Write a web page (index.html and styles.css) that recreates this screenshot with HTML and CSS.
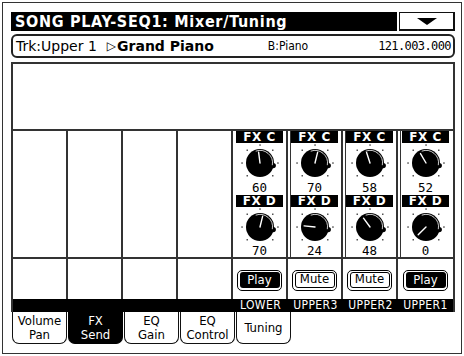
FILE: index.html
```html
<!DOCTYPE html>
<html>
<head>
<meta charset="utf-8">
<link rel="stylesheet" href="styles.css">
</head>
<body>
<svg width="0" height="0" class="defs">
  <defs>
    <symbol id="knob" viewBox="0 0 40 38">
      <g fill="#555">
        <rect x="19.3" y="1.3" width="1.5" height="1.5"/>
        <rect x="32" y="6.5" width="1.5" height="1.5"/>
        <rect x="37.2" y="19.3" width="1.5" height="1.5"/>
        <rect x="32" y="32" width="1.5" height="1.5"/>
        <rect x="6.5" y="6.5" width="1.5" height="1.5"/>
        <rect x="1.3" y="19.3" width="1.5" height="1.5"/>
        <rect x="6.5" y="32" width="1.5" height="1.5"/>
      </g>
      <circle cx="20" cy="20" r="14" fill="#000"/>
      <circle cx="33.2" cy="22.6" r="2.7" fill="#000"/>
      <path d="M15.7 8.2 A12.5 12.5 0 0 1 32.3 22.2" fill="none" stroke="#fff" stroke-width="0.8"/>
    </symbol>
  </defs>
</svg>
<div class="screen">
  <div class="titlebar">
    <div class="title">SONG PLAY-SEQ1: Mixer/Tuning</div>
    <div class="dropdown"><span class="tri"></span></div>
  </div>
  <div class="track">
    <span class="trk">Trk:Upper 1</span>
    <span class="arrow">▷</span><span class="prog">Grand Piano</span>
    <span class="bank">B:Piano</span>
    <span class="num">121.003.000</span>
  </div>
  <div class="main">
    <div class="blank"></div>
    <div class="grid">
      <div class="cell"></div>
      <div class="cell"></div>
      <div class="cell"></div>
      <div class="cell"></div>
      <div class="cell strip">
        <div class="lbl">FX C</div>
        <svg class="knob" width="40" height="38" viewBox="0 0 40 38"><use href="#knob"/><line x1="20" y1="20" x2="18.6" y2="9.1" class="ptr"/></svg>
        <div class="val">60</div>
        <div class="lbl">FX D</div>
        <svg class="knob" width="40" height="38" viewBox="0 0 40 38"><use href="#knob"/><line x1="20" y1="20" x2="22.6" y2="9.3" class="ptr"/></svg>
        <div class="val last">70</div>
      </div>
      <div class="cell strip dbl">
        <div class="lbl">FX C</div>
        <svg class="knob" width="40" height="38" viewBox="0 0 40 38"><use href="#knob"/><line x1="20" y1="20" x2="22.6" y2="9.3" class="ptr"/></svg>
        <div class="val">70</div>
        <div class="lbl">FX D</div>
        <svg class="knob" width="40" height="38" viewBox="0 0 40 38"><use href="#knob"/><line x1="20" y1="20" x2="9.1" y2="18.9" class="ptr"/></svg>
        <div class="val last">24</div>
      </div>
      <div class="cell strip dbl">
        <div class="lbl">FX C</div>
        <svg class="knob" width="40" height="38" viewBox="0 0 40 38"><use href="#knob"/><line x1="20" y1="20" x2="16.6" y2="9.5" class="ptr"/></svg>
        <div class="val">58</div>
        <div class="lbl">FX D</div>
        <svg class="knob" width="40" height="38" viewBox="0 0 40 38"><use href="#knob"/><line x1="20" y1="20" x2="13.5" y2="11.2" class="ptr"/></svg>
        <div class="val last">48</div>
      </div>
      <div class="cell strip dbl lastcol">
        <div class="lbl">FX C</div>
        <svg class="knob" width="40" height="38" viewBox="0 0 40 38"><use href="#knob"/><line x1="20" y1="20" x2="14.5" y2="10.6" class="ptr"/></svg>
        <div class="val">52</div>
        <div class="lbl">FX D</div>
        <svg class="knob" width="40" height="38" viewBox="0 0 40 38"><use href="#knob"/><line x1="20" y1="20" x2="12.2" y2="27.8" class="ptr"/></svg>
        <div class="val last">0</div>
      </div>

      <div class="cell b"></div>
      <div class="cell b"></div>
      <div class="cell b"></div>
      <div class="cell b"></div>
      <div class="cell b"><div class="btn"><div class="in play">Play</div></div></div>
      <div class="cell b"><div class="btn"><div class="in mute">Mute</div></div></div>
      <div class="cell b"><div class="btn"><div class="in mute">Mute</div></div></div>
      <div class="cell b lastcol"><div class="btn"><div class="in play">Play</div></div></div>
    </div>
    <div class="names">
      <span></span><span></span><span></span><span></span>
      <span>LOWER</span><span>UPPER3</span><span>UPPER2</span><span>UPPER1</span>
    </div>
  </div>
  <div class="tabs">
    <div class="tab">Volume<br>Pan</div>
    <div class="tab sel">FX<br>Send</div>
    <div class="tab">EQ<br>Gain</div>
    <div class="tab">EQ<br>Control</div>
    <div class="tab">Tuning</div>
  </div>
</div>
</body>
</html>
```
FILE: styles.css
```css
* { box-sizing: border-box; }
html, body { margin: 0; padding: 0; background: #fff; }
body { width: 464px; height: 356px; overflow: hidden; font-family: "DejaVu Sans", sans-serif; color: #000; }
.defs { position: absolute; }

.screen {
  margin: 2px;
  width: 460px;
  height: 352px;
  border: 1px solid #333;
  padding: 9px 6px 0 8px;
  display: flex;
  flex-direction: column;
}

.titlebar { display: flex; height: 19px; gap: 2px; }
.title {
  flex: 1;
  background: #000;
  color: #fff;
  font-family: "DejaVu Sans Condensed", "DejaVu Sans", sans-serif;
  font-stretch: condensed;
  font-weight: bold;
  font-size: 16px;
  letter-spacing: 0.7px;
  line-height: 19px;
  padding-left: 4px;
  white-space: nowrap;
  overflow: hidden;
}
.dropdown {
  width: 56px;
  border: 2px solid #111;
  border-left-width: 1px;
  border-top-width: 1px;
  display: flex;
  align-items: center;
  justify-content: center;
}
.tri {
  width: 0; height: 0;
  border-left: 10px solid transparent;
  border-right: 10px solid transparent;
  border-top: 7px solid #000;
}

.track {
  margin-top: 3px;
  height: 24px;
  border: 2px solid #222;
  border-radius: 6px;
  display: flex;
  align-items: center;
  padding: 0 2px 0 3px;
  white-space: nowrap;
}
.trk { font-size: 14px; }
.arrow { font-size: 12px; margin-left: 10px; margin-right: 1px; }
.prog { font-weight: bold; font-size: 14px; }
.bank { font-size: 12px; margin-left: 54px; font-family: "DejaVu Sans Condensed", "DejaVu Sans", sans-serif; font-stretch: condensed; }
.num { margin-left: auto; font-family: "DejaVu Sans Mono", monospace; font-size: 12px; letter-spacing: -0.6px; }

.main {
  margin-top: 4px;
  border: 2px solid #333;
  border-bottom: none;
  display: flex;
  flex-direction: column;
}
.blank { height: 65px; }
.grid {
  border-top: 2px solid #333;
  display: grid;
  grid-template-columns: repeat(8, 1fr);
  grid-template-rows: 128px 40px;
}
.cell { border-right: 2px solid #333; border-bottom: 2px solid #333; }
.cell.b { border-bottom: none; display: flex; align-items: center; justify-content: center; padding-top: 2px; }
.cell.lastcol { border-right: none; }
.strip { display: flex; flex-direction: column; align-items: center; }
.dbl { box-shadow: inset 2px 0 0 #fff, inset 3px 0 0 #333; }

.lbl {
  width: 47px;
  height: 12px;
  background: #000;
  color: #fff;
  font-weight: bold;
  font-size: 12px;
  line-height: 12px;
  text-align: center;
  letter-spacing: 0.5px;
}
.knob { display: block; }
.ptr { stroke: #fff; stroke-width: 1.4; stroke-linecap: round; }
.val {
  height: 14px;
  font-family: "DejaVu Sans Mono", monospace;
  font-size: 12.5px;
  line-height: 13px;
  text-align: center;
}
.val.last { height: 12px; line-height: 12px; }

.btn {
  width: 45px;
  height: 21px;
  border: 1.5px solid #000;
  border-radius: 5px;
  padding: 1.5px;
}
.in {
  height: 100%;
  border-radius: 3px;
  font-family: "DejaVu Sans Condensed", "DejaVu Sans", sans-serif;
  font-stretch: condensed;
  font-size: 13px;
  line-height: 15px;
  text-align: center;
}
.in.play { background: #000; color: #fff; }
.in.mute { border: 1.5px solid #000; line-height: 12px; }

.names {
  height: 13px;
  background: #000;
  color: #fff;
  display: grid;
  grid-template-columns: repeat(8, 1fr);
  font-family: "DejaVu Sans Condensed", "DejaVu Sans", sans-serif;
  font-stretch: condensed;
  font-size: 12px;
  line-height: 13px;
  text-align: center;
  letter-spacing: 0.4px;
}

.tabs { display: flex; gap: 1px; height: 33px; padding-left: 1px; }
.tab {
  width: 55px;
  height: 32px;
  border: 1.5px solid #111;
  border-top: none;
  border-radius: 0 0 7px 7px;
  font-family: "DejaVu Sans Condensed", "DejaVu Sans", sans-serif;
  font-stretch: condensed;
  font-size: 13px;
  line-height: 14px;
  text-align: center;
  display: flex;
  align-items: center;
  justify-content: center;
}
.tab.sel { background: #000; color: #fff; border-color: #000; }
```
